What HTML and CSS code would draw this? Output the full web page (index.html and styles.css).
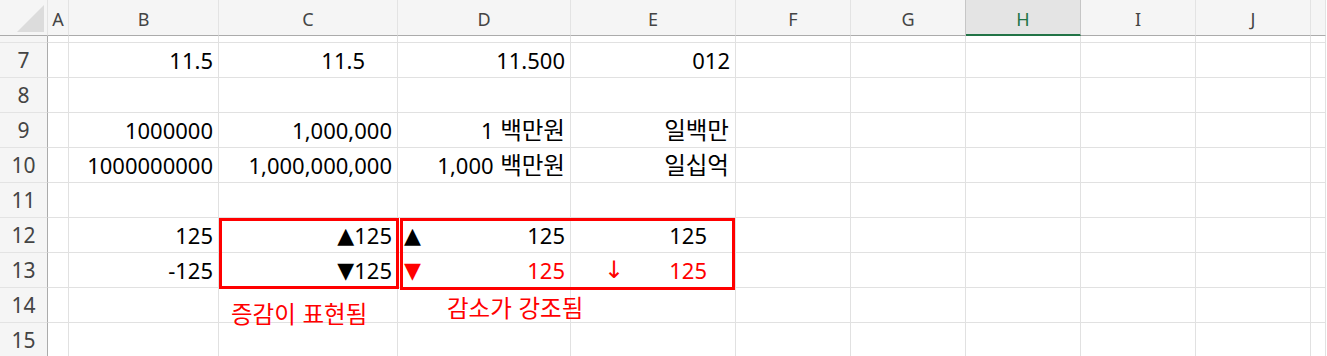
FILE: index.html
```html
<!DOCTYPE html>
<html lang="ko">
<head>
    <meta charset="UTF-8">
    <meta name="viewport" content="width=device-width, initial-scale=1.0">
    <title>숫자 서식</title>
    <link rel="stylesheet" href="styles.css">
</head>
<body>
    <div class="sheet">
        <!-- column headers -->
        <div class="row head">
            <div class="corner"><span class="tri"></span></div>
            <div>A</div><div>B</div><div>C</div><div>D</div><div>E</div>
            <div>F</div><div>G</div><div class="active">H</div><div>I</div><div>J</div><div></div>
        </div>
        <div class="row peek">
            <div class="rh"></div>
            <div></div><div></div><div></div><div></div><div></div>
            <div></div><div></div><div></div><div></div><div></div><div></div>
        </div>
        <div class="row">
            <div class="rh">7</div>
            <div></div><div>11.5</div><div class="pad-dec">11.5</div><div>11.500</div><div>012</div>
            <div></div><div></div><div></div><div></div><div></div><div></div>
        </div>
        <div class="row">
            <div class="rh">8</div>
            <div></div><div></div><div></div><div></div><div></div>
            <div></div><div></div><div></div><div></div><div></div><div></div>
        </div>
        <div class="row">
            <div class="rh">9</div>
            <div></div><div>1000000</div><div>1,000,000</div><div>1<span class="ko">&nbsp;백만원</span></div><div class="ko">일백만</div>
            <div></div><div></div><div></div><div></div><div></div><div></div>
        </div>
        <div class="row">
            <div class="rh">10</div>
            <div></div><div>1000000000</div><div>1,000,000,000</div><div>1,000<span class="ko">&nbsp;백만원</span></div><div class="ko">일십억</div>
            <div></div><div></div><div></div><div></div><div></div><div></div>
        </div>
        <div class="row">
            <div class="rh">11</div>
            <div></div><div></div><div></div><div></div><div></div>
            <div></div><div></div><div></div><div></div><div></div><div></div>
        </div>
        <div class="row">
            <div class="rh">12</div>
            <div></div><div>125</div><div><span class="tri-up">▲</span>125</div>
            <div class="split"><span class="tri-up">▲</span><span>125</span></div>
            <div class="pad-sign">125</div>
            <div></div><div></div><div></div><div></div><div></div><div></div>
        </div>
        <div class="row">
            <div class="rh">13</div>
            <div></div><div>-125</div><div><span class="tri-up">▼</span>125</div>
            <div class="split red"><span class="tri-up">▼</span><span>125</span></div>
            <div class="split pad-sign arrow red"><span class="down">↓</span><span>125</span></div>
            <div></div><div></div><div></div><div></div><div></div><div></div>
        </div>
        <div class="row">
            <div class="rh">14</div>
            <div></div><div></div><div></div><div></div><div></div>
            <div></div><div></div><div></div><div></div><div></div><div></div>
        </div>
        <div class="row">
            <div class="rh">15</div>
            <div></div><div></div><div></div><div></div><div></div>
            <div></div><div></div><div></div><div></div><div></div><div></div>
        </div>

        <!-- red callouts drawn on top of the grid -->
        <div class="mark mark-c"></div>
        <div class="mark mark-de"></div>
        <div class="note note-c">증감이 표현됨</div>
        <div class="note note-de">감소가 강조됨</div>
    </div>
</body>
</html>
```

FILE: styles.css
```css
body {
    margin: 0;
    background-color: #fff;
    font-family: "Noto Sans", "Noto Sans CJK KR", sans-serif;
    overflow: hidden;
}
.sheet {
    position: relative;
    width: 1326px;
}
.row {
    display: grid;
    grid-template-columns: 48px 21px 150px 179px 173px 165px 115px 115px 115px 115px 115px 15px;
    height: 35px;
}
.row > div {
    box-sizing: border-box;
    display: flex;
    align-items: center;
    justify-content: flex-end;
    padding: 0 5px;
    border-right: 1px solid #e1e1e1;
    border-bottom: 1px solid #e1e1e1;
    font-size: 22px;
    color: #000;
    white-space: nowrap;
    min-width: 0;
}

/* header strip */
.row.head {
    height: 36px;
}
.row.head > div {
    justify-content: center;
    padding: 3px 0 0;
    background-color: #f5f5f5;
    border-right-color: #e3e3e3;
    border-bottom-color: #ababab;
    font-size: 18px;
    color: #444;
}
.row.head > div.active {
    background-color: #e4e4e4;
    color: #217346;
    border-right-color: #c6c6c6;
    border-bottom: 2px solid #217346;
}
.row.head > div:nth-child(8) {
    border-right-color: #c6c6c6;
}
.row.head > .corner {
    justify-content: flex-end;
    align-items: flex-end;
    padding: 0 3px 3px 0;
}
.tri {
    width: 27px;
    height: 27px;
    background-color: #dcdcdc;
    clip-path: polygon(100% 0, 100% 100%, 0 100%);
}
.row.peek {
    height: 7px;
}

/* row numbers */
.row > .rh {
    justify-content: center;
    padding: 0;
    background-color: #f5f5f5;
    border-right-color: #ababab;
    border-bottom-color: #e3e3e3;
    font-size: 21px;
    color: #444;
}

/* hangul reads a little larger than the digits */
.ko {
    font-family: "Noto Sans CJK KR", sans-serif;
    font-size: 23.5px;
    line-height: 1;
}
.row > .ko {
    font-size: 23.5px;
    padding-right: 6px;
}

.row > .pad-dec {
    padding-right: 32px;
}
.row > .pad-sign {
    padding-right: 28px;
}
.row > .split {
    justify-content: space-between;
    padding-left: 6px;
}
.row > .arrow {
    padding-left: 33px;
}
.tri-up {
    font-family: "DejaVu Sans", sans-serif;
    font-size: 22px;
}
.down {
    font-family: "DejaVu Sans", sans-serif;
    font-size: 24px;
}
.row > .red {
    color: #f00;
}

/* callout shapes */
.mark {
    position: absolute;
    box-sizing: border-box;
    border: 3px solid #f00;
}
.mark-c {
    left: 219px;
    top: 218px;
    width: 180px;
    height: 71px;
}
.mark-de {
    left: 400px;
    top: 218px;
    width: 335px;
    height: 72px;
}
.note {
    position: absolute;
    font-family: "Noto Sans CJK KR", sans-serif;
    font-size: 23.5px;
    line-height: 24px;
    color: #f00;
    white-space: nowrap;
}
.note-c {
    left: 231px;
    top: 301px;
}
.note-de {
    left: 447px;
    top: 295px;
}
```
